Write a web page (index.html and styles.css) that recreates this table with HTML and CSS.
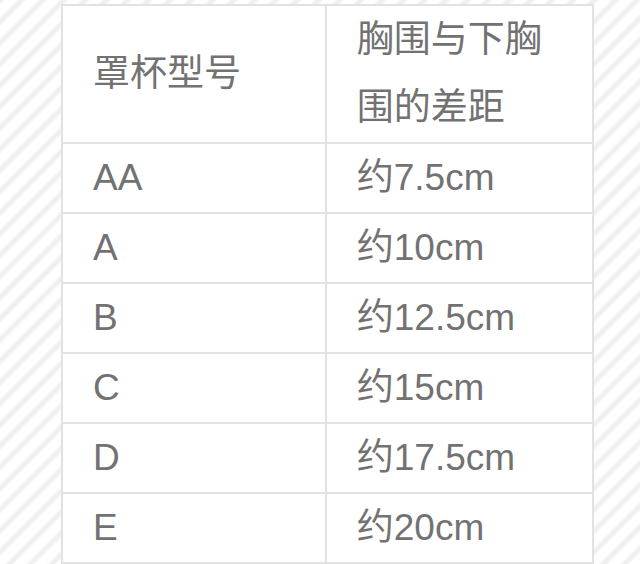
FILE: index.html
```html
<!DOCTYPE html>
<html lang="zh">
<head>
<meta charset="utf-8">
<link rel="stylesheet" href="styles.css">
</head>
<body>
<div class="page">
  <table class="size-table">
    <colgroup><col class="col-a"><col class="col-b"></colgroup>
    <thead>
      <tr class="head-row">
        <th>罩杯型号</th>
        <th class="two-line">胸围与下胸<br>围的差距</th>
      </tr>
    </thead>
    <tbody>
      <tr><td>AA</td><td>约7.5cm</td></tr>
      <tr><td>A</td><td>约10cm</td></tr>
      <tr><td>B</td><td>约12.5cm</td></tr>
      <tr><td>C</td><td>约15cm</td></tr>
      <tr><td>D</td><td>约17.5cm</td></tr>
      <tr><td>E</td><td>约20cm</td></tr>
    </tbody>
  </table>
</div>
</body>
</html>
```
FILE: styles.css
```css
html, body {
  margin: 0;
  padding: 0;
  height: 100%;
}
body {
  background-color: #f6f6f6;
  background-image: repeating-linear-gradient(
    -45deg,
    #ffffff 0px,
    #ffffff 7px,
    #efefef 10px,
    #efefef 12px,
    #ffffff 15px
  );
  font-family: "Liberation Sans", "Noto Sans CJK SC", sans-serif;
  overflow: hidden;
}
.page {
  padding: 4px 0 0 61px;
}
.size-table {
  width: 533px;
  border-collapse: collapse;
  background: #ffffff;
  color: #727272;
  font-size: 37px;
}
.col-a { width: 265px; }
.col-b { width: 268px; }
.size-table th,
.size-table td {
  border: 2px solid #e2e2e2;
  text-align: left;
  font-weight: normal;
  padding: 0 0 0 30px;
  height: 66px;
  line-height: 68px;
  vertical-align: middle;
}
.head-row th {
  height: 130px;
  line-height: 68px;
}
```
